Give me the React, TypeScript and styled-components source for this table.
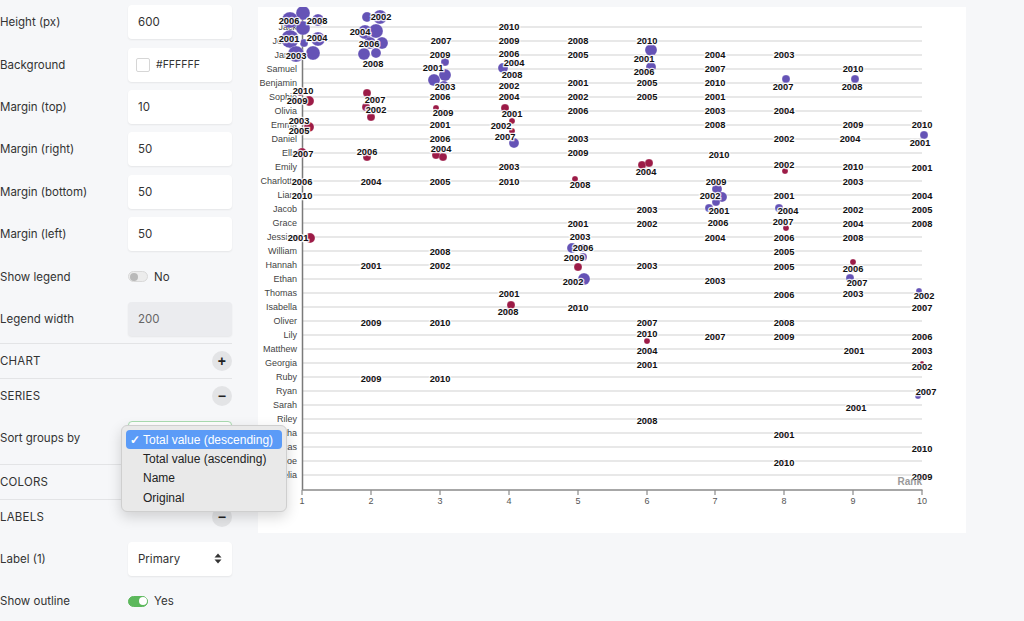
import React from "react";
import styled, { createGlobalStyle } from "styled-components";

const PURPLE = "#6553b6";
const RED = "#9c1b47";

const GlobalStyle = createGlobalStyle`
  body {
    margin: 0;
    background: #f6f7f9;
    font-family: Inter, "Liberation Sans", sans-serif;
    color: #333;
  }
`;

const Page = styled.div`
  display: flex;
  align-items: flex-start;
  gap: 26px;
  width: 1024px;
  height: 621px;
  overflow: hidden;
`;

const Panel = styled.div`
  width: 232px;
  flex: none;
  font-size: 11.5px;
`;

const Block = styled.div`
  padding: 1px 0 3px;
  border-bottom: 1px solid #e3e4e6;
`;

const Section = styled.div`
  border-bottom: 1px solid #e3e4e6;
`;

const SectionHead = styled.div`
  height: 34px;
  display: flex;
  align-items: center;
  justify-content: space-between;
  text-transform: uppercase;
  letter-spacing: 0.2px;
`;

const RoundButton = styled.span`
  width: 20px;
  height: 20px;
  border-radius: 50%;
  background: #e3e4e6;
  display: flex;
  align-items: center;
  justify-content: center;
  font: bold 14px "Liberation Sans", Arial, sans-serif;
  color: #222;
`;

const SectionBody = styled.div`
  padding: 4px 0;
`;

const Row = styled.div`
  display: grid;
  grid-template-columns: 128px 104px;
  align-items: center;
  height: 42.4px;
  position: relative;
`;

const Label = styled.span`
  white-space: nowrap;
`;

const Field = styled.div<{ $disabled?: boolean; $focus?: boolean }>`
  height: 34px;
  box-sizing: border-box;
  border-radius: 4px;
  border: 1px solid ${(p) => (p.$focus ? "#a9dcb0" : "transparent")};
  background: ${(p) => (p.$disabled ? "#ebecef" : "#fff")};
  box-shadow: 0 1px 2px rgba(0, 0, 0, 0.07);
  padding: 0 9px;
  display: flex;
  align-items: center;
  justify-content: space-between;
  color: ${(p) => (p.$disabled ? "#666" : "#333")};
`;

const ColorValue = styled.span`
  display: flex;
  align-items: center;
  gap: 6px;
  font-size: 10.5px;
  margin-left: -2px;
`;

const Swatch = styled.span`
  width: 12px;
  height: 12px;
  border: 1px solid #d6d6d6;
  border-radius: 2px;
  background: #fff;
`;

const ToggleWrap = styled.span`
  display: flex;
  align-items: center;
  gap: 6px;
`;

const Toggle = styled.span<{ $on?: boolean }>`
  position: relative;
  width: 20px;
  height: 11px;
  box-sizing: border-box;
  border-radius: 6px;
  border: 1px solid ${(p) => (p.$on ? "#5cb85c" : "#d9d9d9")};
  background: ${(p) => (p.$on ? "#5cb85c" : "#ececec")};
  &::after {
    content: "";
    position: absolute;
    top: 0.5px;
    left: ${(p) => (p.$on ? "9.5px" : "0.5px")};
    width: 8px;
    height: 8px;
    border-radius: 50%;
    background: ${(p) => (p.$on ? "#fff" : "#b9b9b9")};
  }
`;

const Menu = styled.div`
  position: absolute;
  left: 121px;
  top: 8px;
  width: 166px;
  box-sizing: border-box;
  padding: 4px;
  background: #e9e9e9;
  border: 1px solid #cfcfcf;
  border-radius: 6px;
  box-shadow: 0 5px 14px rgba(0, 0, 0, 0.16);
  font: 12px "Liberation Sans", Arial, sans-serif;
  color: #222;
  z-index: 5;
`;

const MenuItem = styled.div<{ $active?: boolean }>`
  height: 19.3px;
  display: flex;
  align-items: center;
  padding-left: 4px;
  border-radius: 4px;
  white-space: nowrap;
  background: ${(p) => (p.$active ? "#5b9bf7" : "transparent")};
  color: ${(p) => (p.$active ? "#fff" : "#222")};
`;

const Check = styled.span`
  width: 13px;
  flex: none;
  font-size: 12px;
  font-weight: bold;
`;

const Card = styled.div`
  margin-top: 7px;
  width: 708px;
  height: 526px;
  background: #fff;
  flex: none;
`;

const NameText = styled.text`
  font: 9px "Liberation Sans", Arial, sans-serif;
  fill: #444;
  text-anchor: end;
  dominant-baseline: central;
`;

const YearText = styled.text`
  font: bold 9.3px "Liberation Sans", Arial, sans-serif;
  fill: #111;
  stroke: rgba(255, 255, 255, 0.86);
  stroke-width: 2.6px;
  paint-order: stroke;
  text-anchor: middle;
  dominant-baseline: central;
`;

const TickText = styled.text`
  font: 9px "Liberation Sans", Arial, sans-serif;
  fill: #555;
  text-anchor: middle;
`;

const AxisTitle = styled.text`
  font: bold 10px "Liberation Sans", Arial, sans-serif;
  fill: #9a9a9a;
  text-anchor: end;
`;

const NAMES: [string, "p" | "r"][] = [
  ["Jack", "p"], ["Jonah", "p"], ["Jared", "p"], ["Samuel", "p"], ["Benjamin", "p"],
  ["Sophie", "r"], ["Olivia", "r"], ["Emma", "r"], ["Daniel", "p"], ["Ella", "r"],
  ["Emily", "r"], ["Charlotte", "r"], ["Liam", "p"], ["Jacob", "p"], ["Grace", "r"],
  ["Jessica", "r"], ["William", "p"], ["Hannah", "r"], ["Ethan", "p"], ["Thomas", "p"],
  ["Isabella", "r"], ["Oliver", "p"], ["Lily", "r"], ["Matthew", "p"], ["Georgia", "r"],
  ["Ruby", "r"], ["Ryan", "p"], ["Sarah", "r"], ["Riley", "p"], ["Samantha", "r"],
  ["Lucas", "p"], ["Chloe", "r"], ["Amelia", "r"],
];

const RANK_X = [302, 371, 440, 509, 578, 647, 715, 784, 853, 922];

// [x, y, r, colour]
const BUBBLES: [number, number, number, "p" | "r"][] = [
  [303, 13, 7, "p"], [290, 20, 8, "p"], [318, 20, 6, "p"], [303, 28, 7, "p"],
  [290, 39, 9, "p"], [318, 39, 7, "p"], [304, 43, 4, "p"], [296, 54, 8, "p"], [313, 53, 7, "p"],
  [367, 17, 5, "p"], [380, 17, 7, "p"], [365, 32, 7, "p"], [376, 31, 7, "p"],
  [370, 43, 6, "p"], [382, 43, 6, "p"], [364, 54, 6, "p"], [376, 53, 5, "p"],
  [445, 62, 4, "p"], [445, 75, 6, "p"], [434, 80, 6, "p"], [444, 86, 5, "p"],
  [503, 68, 5, "p"], [514, 143, 5, "p"],
  [572, 248, 5, "p"], [583, 248, 4, "p"], [583, 257, 4, "p"], [584, 279, 6, "p"],
  [651, 50, 6, "p"], [651, 67, 5, "p"],
  [717, 189, 5, "p"], [722, 197, 5, "p"], [716, 202, 4, "p"], [709, 208, 4, "p"],
  [786, 79, 4, "p"], [779, 208, 4, "p"],
  [855, 79, 4, "p"], [850, 278, 4, "p"],
  [924, 135, 4, "p"], [919, 291, 3, "p"], [918, 396, 3, "p"],
  [300, 93, 3, "r"], [309, 101, 5, "r"], [309, 127, 5, "r"], [302, 153, 5, "r"], [310, 238, 5, "r"],
  [367, 93, 4, "r"], [366, 107, 4, "r"], [371, 117, 4, "r"], [367, 157, 4, "r"],
  [436, 108, 3, "r"], [436, 155, 4, "r"], [443, 157, 4, "r"],
  [505, 108, 4, "r"], [512, 121, 3, "r"], [512, 131, 3, "r"], [511, 305, 4, "r"],
  [575, 179, 3, "r"], [578, 267, 4, "r"],
  [642, 165, 4, "r"], [649, 163, 4, "r"], [647, 341, 3, "r"],
  [785, 171, 3, "r"], [786, 228, 3, "r"], [853, 262, 3, "r"], [922, 363, 2, "r"],
];

// [year, x, y]
const YEARS: [string, number, number][] = [
  ["2006", 289, 21], ["2008", 317, 21], ["2001", 289, 39], ["2004", 317, 38], ["2003", 296, 56],
  ["2010", 303, 91], ["2009", 297, 101], ["2003", 299, 121], ["2005", 299, 131], ["2007", 303, 154],
  ["2006", 302, 182], ["2010", 302, 196], ["2001", 298, 238],
  ["2002", 381, 17], ["2004", 360, 32], ["2006", 369, 44], ["2008", 373, 64], ["2007", 375, 100],
  ["2002", 376, 110], ["2006", 367, 152], ["2004", 371, 182], ["2001", 371, 266], ["2009", 371, 323],
  ["2009", 371, 379],
  ["2007", 441, 41], ["2009", 440, 55], ["2001", 433, 68], ["2003", 445, 87], ["2006", 440, 97],
  ["2009", 443, 113], ["2001", 440, 125], ["2006", 440, 139], ["2004", 441, 149], ["2005", 440, 182],
  ["2008", 440, 252], ["2002", 440, 266], ["2010", 440, 323], ["2010", 440, 379],
  ["2010", 509, 27], ["2009", 509, 41], ["2006", 509, 54], ["2004", 514, 63], ["2008", 512, 75],
  ["2002", 509, 86], ["2004", 509, 97], ["2001", 512, 114], ["2002", 501, 126], ["2007", 505, 137],
  ["2003", 509, 167], ["2010", 509, 182], ["2001", 509, 294], ["2008", 508, 312],
  ["2008", 578, 41], ["2005", 578, 55], ["2001", 578, 83], ["2002", 578, 97], ["2006", 578, 111],
  ["2003", 578, 139], ["2009", 578, 153], ["2008", 580, 185], ["2001", 578, 224], ["2003", 580, 237],
  ["2006", 583, 248], ["2009", 574, 258], ["2002", 573, 282], ["2010", 578, 308],
  ["2010", 647, 41], ["2001", 644, 59], ["2006", 644, 72], ["2005", 647, 83], ["2005", 647, 97],
  ["2004", 646, 172], ["2003", 647, 210], ["2002", 647, 224], ["2003", 647, 266], ["2007", 647, 323],
  ["2010", 647, 334], ["2004", 647, 351], ["2001", 647, 365], ["2008", 647, 421],
  ["2004", 715, 55], ["2007", 715, 69], ["2010", 715, 83], ["2001", 715, 97], ["2003", 715, 111],
  ["2008", 715, 125], ["2010", 719, 155], ["2009", 716, 182], ["2002", 710, 196], ["2001", 719, 211],
  ["2006", 718, 223], ["2004", 715, 238], ["2003", 715, 281], ["2007", 715, 337],
  ["2003", 784, 55], ["2007", 783, 87], ["2004", 784, 111], ["2002", 784, 139], ["2002", 784, 165],
  ["2001", 784, 196], ["2004", 788, 211], ["2007", 783, 222], ["2006", 784, 238], ["2005", 784, 252],
  ["2005", 784, 267], ["2006", 784, 295], ["2008", 784, 323], ["2009", 784, 337], ["2001", 784, 435],
  ["2010", 784, 463],
  ["2010", 853, 69], ["2008", 852, 87], ["2009", 853, 125], ["2004", 850, 139], ["2010", 853, 167],
  ["2003", 853, 182], ["2002", 853, 210], ["2004", 853, 224], ["2008", 853, 238], ["2006", 853, 269],
  ["2007", 857, 283], ["2003", 853, 294], ["2001", 854, 351], ["2001", 856, 408],
  ["2010", 922, 125], ["2001", 920, 143], ["2001", 922, 168], ["2004", 922, 196], ["2005", 922, 210],
  ["2008", 922, 224], ["2002", 924, 296], ["2007", 922, 308], ["2006", 922, 337], ["2003", 922, 351],
  ["2002", 922, 367], ["2007", 926, 392], ["2010", 922, 449], ["2009", 922, 477],
];

const rowY = (i: number) => 27 + 14 * i;

const colourAt = (y: number) => {
  const i = Math.max(0, Math.min(NAMES.length - 1, Math.round((y - 27) / 14)));
  return NAMES[i][1] === "p" ? PURPLE : RED;
};

function RankChart() {
  return (
    <svg width="708" height="526" viewBox="258 7 708 526">
      {NAMES.map(([name], i) => (
        <NameText key={name} x={297} y={rowY(i)}>
          {name}
        </NameText>
      ))}
      {NAMES.map(([name], i) => (
        <line key={"l" + name} x1={302} x2={922} y1={rowY(i)} y2={rowY(i)} stroke="#e1e1e1" strokeWidth={1.5} />
      ))}
      <line x1={302.5} x2={302.5} y1={10} y2={490} stroke="#7a7a7a" strokeWidth={1.5} />
      <line x1={302} x2={922.5} y1={490} y2={490} stroke="#8a8a8a" strokeWidth={1.5} />
      {RANK_X.map((x, i) => (
        <g key={x}>
          <line x1={x} x2={x} y1={490} y2={495} stroke="#8a8a8a" strokeWidth={1.2} />
          <TickText x={x} y={504}>
            {i + 1}
          </TickText>
        </g>
      ))}
      {BUBBLES.map(([x, y, r, c], i) => (
        <circle key={"b" + i} cx={x} cy={y} r={r} fill={c === "p" ? PURPLE : RED} stroke="#fff" strokeOpacity={0.35} strokeWidth={0.6} />
      ))}
      {YEARS.map(([, x, y], i) => (
        <circle key={"d" + i} cx={x} cy={y} r={3.2} fill={colourAt(y)} fillOpacity={0.7} />
      ))}
      {YEARS.map(([t, x, y], i) => (
        <YearText key={"y" + i} x={x} y={y}>
          {t}
        </YearText>
      ))}
      <AxisTitle x={922} y={485}>
        Rank
      </AxisTitle>
    </svg>
  );
}

function UpDown() {
  return (
    <svg width="8" height="11" viewBox="0 0 8 11">
      <path d="M4 0.5 L7.5 4.5 H0.5 Z M4 10.5 L7.5 6.5 H0.5 Z" fill="#333" />
    </svg>
  );
}

const SETTINGS: [string, string][] = [
  ["Height (px)", "600"],
  ["Background", "#FFFFFF"],
  ["Margin (top)", "10"],
  ["Margin (right)", "50"],
  ["Margin (bottom)", "50"],
  ["Margin (left)", "50"],
];

export default function App() {
  return (
    <>
      <GlobalStyle />
      <Page>
        <Panel>
          <Block>
            {SETTINGS.map(([label, value]) => (
              <Row key={label}>
                <Label>{label}</Label>
                <Field>
                  {label === "Background" ? (
                    <ColorValue>
                      <Swatch />
                      {value}
                    </ColorValue>
                  ) : (
                    value
                  )}
                </Field>
              </Row>
            ))}
            <Row>
              <Label>Show legend</Label>
              <ToggleWrap>
                <Toggle />
                No
              </ToggleWrap>
            </Row>
            <Row>
              <Label>Legend width</Label>
              <Field $disabled>200</Field>
            </Row>
          </Block>
          <Section>
            <SectionHead>
              Chart
              <RoundButton>+</RoundButton>
            </SectionHead>
          </Section>
          <Section>
            <SectionHead>
              Series
              <RoundButton>−</RoundButton>
            </SectionHead>
            <SectionBody>
              <Row>
                <Label>Sort groups by</Label>
                <Field $focus />
                <Menu>
                  <MenuItem $active>
                    <Check>✓</Check>Total value (descending)
                  </MenuItem>
                  <MenuItem>
                    <Check />Total value (ascending)
                  </MenuItem>
                  <MenuItem>
                    <Check />Name
                  </MenuItem>
                  <MenuItem>
                    <Check />Original
                  </MenuItem>
                </Menu>
              </Row>
            </SectionBody>
          </Section>
          <Section>
            <SectionHead>Colors</SectionHead>
          </Section>
          <Section>
            <SectionHead>
              Labels
              <RoundButton>−</RoundButton>
            </SectionHead>
            <SectionBody>
              <Row>
                <Label>Label (1)</Label>
                <Field>
                  Primary
                  <UpDown />
                </Field>
              </Row>
              <Row>
                <Label>Show outline</Label>
                <ToggleWrap>
                  <Toggle $on />
                  Yes
                </ToggleWrap>
              </Row>
            </SectionBody>
          </Section>
        </Panel>
        <Card>
          <RankChart />
        </Card>
      </Page>
    </>
  );
}
